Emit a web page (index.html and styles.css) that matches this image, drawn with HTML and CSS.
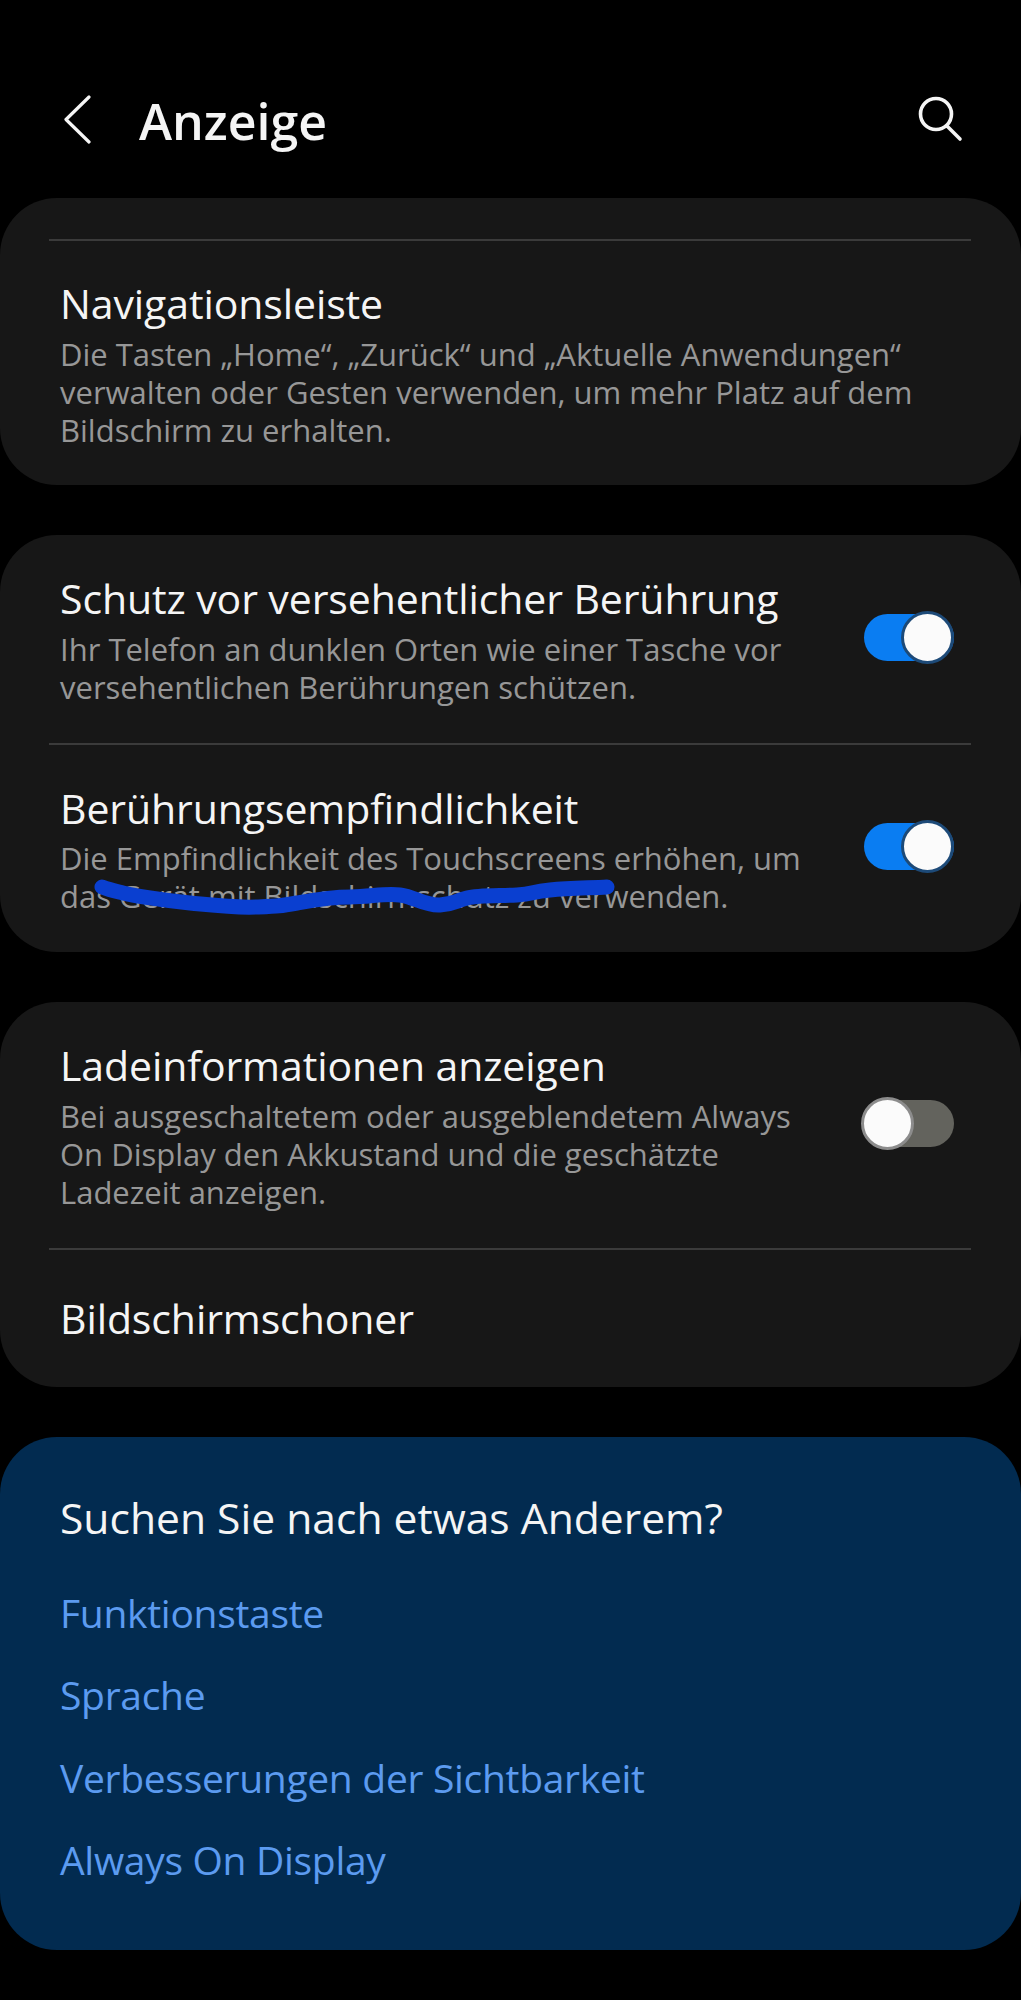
FILE: index.html
```html
<!DOCTYPE html>
<html lang="de">
<head>
    <meta charset="utf-8">
    <meta name="viewport" content="width=device-width, initial-scale=1">
    <title>Anzeige</title>
    <link rel="stylesheet" href="styles.css">
</head>
<body>
    <header class="topbar">
        <svg class="icon-back" width="30" height="52" viewBox="0 0 30 52">
            <path d="M27 5 L4 27.5 L27 50" fill="none" stroke="#f5f5f5" stroke-width="3.2" stroke-linecap="round" stroke-linejoin="round"/>
        </svg>
        <h1 class="page-title">Anzeige</h1>
        <svg class="icon-search" width="48" height="48" viewBox="0 0 48 48">
            <circle cx="21" cy="19" r="15.5" fill="none" stroke="#f5f5f5" stroke-width="3.6"/>
            <path d="M32 31 L45 44" fill="none" stroke="#f5f5f5" stroke-width="3.6" stroke-linecap="round"/>
        </svg>
    </header>

    <section class="card card-first">
        <div class="divider"></div>
        <div class="item">
            <div class="item-text">
                <div class="item-title">Navigationsleiste</div>
                <div class="item-sub">Die Tasten „Home“, „Zurück“ und „Aktuelle Anwendungen“<br>verwalten oder Gesten verwenden, um mehr Platz auf dem<br>Bildschirm zu erhalten.</div>
            </div>
        </div>
    </section>

    <section class="card">
        <div class="item">
            <div class="item-text">
                <div class="item-title">Schutz vor versehentlicher Berührung</div>
                <div class="item-sub">Ihr Telefon an dunklen Orten wie einer Tasche vor<br>versehentlichen Berührungen schützen.</div>
            </div>
            <div class="toggle toggle-on"><span class="thumb"></span></div>
        </div>
        <div class="divider"></div>
        <div class="item">
            <div class="item-text">
                <div class="item-title">Berührungsempfindlichkeit</div>
                <div class="item-sub">Die Empfindlichkeit des Touchscreens erhöhen, um<br>das Gerät mit Bildschirmschutz zu verwenden.</div>
            </div>
            <div class="toggle toggle-on"><span class="thumb"></span></div>
            <!-- blaue Markierung ueber dem Text -->
            <svg class="scribble" width="530" height="45" viewBox="0 0 530 45">
                <path d="M12 12 C20 15 25 16 33 18 S70 25 100 28 S145 33 167 32 S190 31 207 28 S240 22 260 22 S295 18 310 20 S335 31 350 30 S365 26 377 23 S410 21 427 20 S440 17 460 15 S500 13 517 12" fill="none" stroke="#0a3fd0" stroke-width="15" stroke-linecap="round" stroke-linejoin="round"/>
            </svg>
        </div>
    </section>

    <section class="card">
        <div class="item">
            <div class="item-text">
                <div class="item-title">Ladeinformationen anzeigen</div>
                <div class="item-sub">Bei ausgeschaltetem oder ausgeblendetem Always<br>On Display den Akkustand und die geschätzte<br>Ladezeit anzeigen.</div>
            </div>
            <div class="toggle toggle-off"><span class="thumb"></span></div>
        </div>
        <div class="divider"></div>
        <div class="item item-single">
            <div class="item-title">Bildschirmschoner</div>
        </div>
    </section>

    <section class="card card-blue">
        <div class="blue-title">Suchen Sie nach etwas Anderem?</div>
        <a class="blue-link">Funktionstaste</a>
        <a class="blue-link">Sprache</a>
        <a class="blue-link">Verbesserungen der Sichtbarkeit</a>
        <a class="blue-link">Always On Display</a>
    </section>
</body>
</html>
```

FILE: styles.css
```css
html, body {
    margin: 0;
    padding: 0;
    background-color: #000;
}

body {
    font-family: "Open Sans", "Noto Sans", sans-serif;
    color: #f5f5f5;
    height: 2000px;
    overflow: hidden;
}

.topbar {
    height: 198px;
    box-sizing: border-box;
    padding: 92px 58px 0 62px;
    display: flex;
    align-items: flex-start;
}

.icon-back {
    flex: none;
}

.page-title {
    margin: 0 0 0 47px;
    font-size: 50px;
    font-weight: 600;
    line-height: 58px;
    flex: 1;
}

.icon-search {
    flex: none;
    margin-top: 3px;
}

.card {
    background-color: #171717;
    border-radius: 57px;
    margin-bottom: 50px;
}

.card-first {
    height: 287px;
    padding-top: 41px;
    box-sizing: border-box;
}

.card-first .item {
    padding-top: 41px;
}

.divider {
    height: 2px;
    margin: 0 50px 0 49px;
    background-color: #3b3b3b;
}

.item {
    display: flex;
    align-items: center;
    padding: 42px 67px 37px 60px;
    position: relative;
}

.item-text {
    flex: 1;
}

.item-title {
    font-size: 41px;
    line-height: 44px;
    letter-spacing: -0.1px;
    margin-top: -1px;
    color: #f5f5f5;
}

.item-sub {
    margin-top: 9.5px;
    font-size: 31px;
    line-height: 38px;
    color: #979797;
}

.item-single {
    height: 137px;
    box-sizing: border-box;
    padding-top: 0;
    padding-bottom: 0;
}

.toggle {
    position: relative;
    flex: none;
    width: 90px;
    height: 47px;
    border-radius: 24px;
    margin-bottom: 8px;
}

.toggle-on {
    background-color: #0a7df2;
}

.toggle-off {
    background-color: #63635d;
}

.thumb {
    position: absolute;
    top: -3px;
    width: 47px;
    height: 47px;
    border-radius: 50%;
    background-color: #fbfbfb;
    border: 3px solid #1d4a78;
}

.toggle-on .thumb {
    right: 0;
}

.toggle-off .thumb {
    left: -3px;
    border-color: #8c8c8c;
}

.scribble {
    position: absolute;
    left: 90px;
    top: 130px;
}

.card-blue {
    background-color: #022b50;
    height: 513px;
    box-sizing: border-box;
    padding: 58px 60px 0;
    margin-bottom: 0;
}

.blue-title {
    font-size: 42.6px;
    line-height: 44px;
    margin-bottom: 33px;
}

.blue-link {
    display: block;
    font-size: 39px;
    letter-spacing: -0.3px;
    line-height: 82.6px;
    color: #5c9bf0;
}
```
